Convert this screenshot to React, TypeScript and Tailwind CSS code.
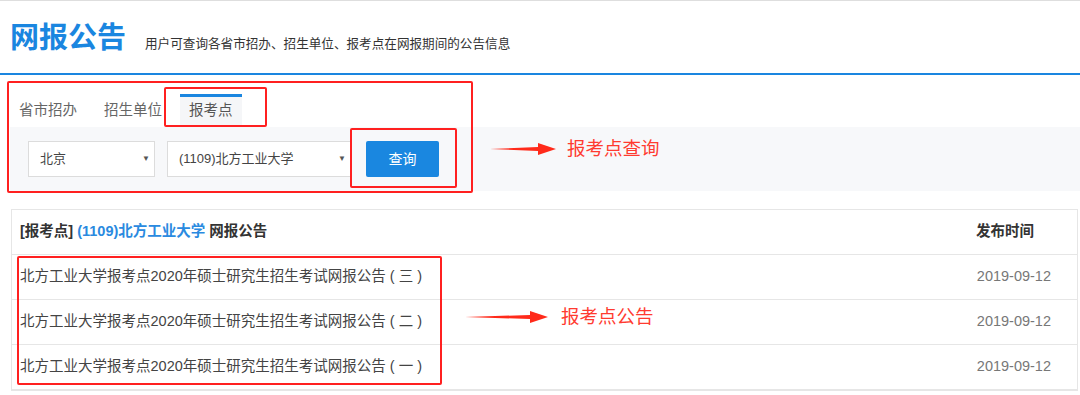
import React from "react";

const FONT = "font-['Liberation_Sans','Noto_Sans_CJK_SC',sans-serif]";

const rows = [
    { title: "北方工业大学报考点2020年硕士研究生招生考试网报公告 ( 三 )", date: "2019-09-12" },
    { title: "北方工业大学报考点2020年硕士研究生招生考试网报公告 ( 二 )", date: "2019-09-12" },
    { title: "北方工业大学报考点2020年硕士研究生招生考试网报公告 ( 一 )", date: "2019-09-12" },
];

const Arrow = ({ width }: { width: number }) => (
    <svg width={width} height="14" viewBox={`0 0 ${width} 14`}>
        <polygon
            points={`0,7 ${width - 18},5 ${width - 18},1 ${width},7 ${width - 18},13 ${width - 18},9`}
            fill="#ff2a1a"
        />
    </svg>
);

const Select = ({ label, width }: { label: string; width: string }) => (
    <div className={`${width} h-[36px] bg-white border border-[#dcdcdc] flex items-center justify-between pl-[11px] pr-[4px] text-[13px] text-[#444]`}>
        <span>{label}</span>
        <span className="text-[8px] text-[#555]">▼</span>
    </div>
);

export default function App() {
    return (
        <div className={`relative w-[1080px] h-[395px] overflow-hidden bg-white border-t border-[#dedede] ${FONT}`}>
            {/* header */}
            <div className="h-[72px] flex items-baseline gap-[19px] pl-[10px] pt-[19px]">
                <h1 className="text-[29px] leading-[36px] font-bold text-[#1a86e0]">网报公告</h1>
                <p className="text-[12.6px] text-[#333]">用户可查询各省市招办、招生单位、报考点在网报期间的公告信息</p>
            </div>
            <div className="h-[2px] bg-[#1a86e0]" />

            {/* tabs */}
            <div className="mt-[19px] ml-[10px] flex gap-[9px] h-[33px] text-[14.5px]">
                <div className="px-[9px] flex items-center text-[#666]">省市招办</div>
                <div className="px-[9px] flex items-center text-[#666]">招生单位</div>
                <div className="px-[9px] flex items-center text-[#555] bg-[#f5f6f8] border-t-[3px] border-[#1a86e0] pb-[2px]">报考点</div>
            </div>

            {/* query panel */}
            <div className="ml-[10px] h-[64px] bg-[#f7f8fa] flex items-center pl-[18px]">
                <Select label="北京" width="w-[127px]" />
                <div className="w-[12px]" />
                <Select label="(1109)北方工业大学" width="w-[184px]" />
                <div className="w-[15px]" />
                <button className="w-[73px] h-[36px] rounded-[2px] bg-[#1a87e0] text-white text-[14px]">查询</button>
            </div>

            {/* table */}
            <div className="mt-[18px] ml-[11px] w-[1067px] border border-[#e6e6e6]">
                <div className="h-[45px] flex items-center justify-between pl-[8px] pr-[43px] border-b border-[#e6e6e6] text-[14.5px] font-bold text-[#333]">
                    <span>
                        [报考点] <span className="text-[#2a8ae0]">(1109)北方工业大学</span> 网报公告
                    </span>
                    <span>发布时间</span>
                </div>
                {rows.map((r, i) => (
                    <div key={i} className="h-[45px] flex items-center justify-between pl-[8px] pr-[26px] border-b border-[#e6e6e6] text-[14.5px]">
                        <span className="text-[#444]">{r.title}</span>
                        <span className="text-[#777]">{r.date}</span>
                    </div>
                ))}
            </div>

            {/* red annotations */}
            <div className="absolute left-[7px] top-[80px] w-[466px] h-[112px] border-2 border-[#ff2020] rounded-[2px]" />
            <div className="absolute left-[164px] top-[86px] w-[103px] h-[40px] border-2 border-[#ff2020] rounded-[2px]" />
            <div className="absolute left-[350px] top-[127px] w-[107px] h-[60px] border-2 border-[#ff2020] rounded-[2px]" />
            <div className="absolute left-[17px] top-[255px] w-[425px] h-[129px] border-2 border-[#ff2020] rounded-[2px]" />

            <div className="absolute left-[490px] top-[134px] flex items-center gap-[11px]">
                <Arrow width={66} />
                <span className="text-[18.5px] text-[#ff3b30]">报考点查询</span>
            </div>
            <div className="absolute left-[465px] top-[302px] flex items-center gap-[13px]">
                <Arrow width={83} />
                <span className="text-[18.5px] text-[#ff3b30]">报考点公告</span>
            </div>
        </div>
    );
}
